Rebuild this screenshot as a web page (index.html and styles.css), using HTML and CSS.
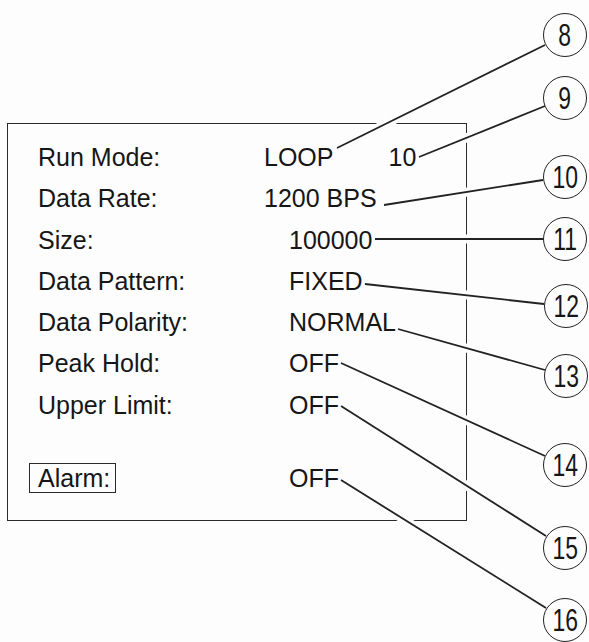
FILE: index.html
```html
<!DOCTYPE html>
<html lang="en">
<head>
  <meta charset="UTF-8">
  <meta name="viewport" content="width=device-width, initial-scale=1.0">
  <title>Run Setup Screen</title>
  <link rel="stylesheet" href="styles.css">
</head>
<body>

  <div class="sheet">
    <div class="panel">
      <div class="settings">
        <div class="label">Run Mode:</div>
        <div class="value">LOOP<span class="count">10</span></div>

        <div class="label">Data Rate:</div>
        <div class="value">1200 BPS</div>

        <div class="label">Size:</div>
        <div class="value indent">100000</div>

        <div class="label">Data Pattern:</div>
        <div class="value indent">FIXED</div>

        <div class="label">Data Polarity:</div>
        <div class="value indent">NORMAL</div>

        <div class="label">Peak Hold:</div>
        <div class="value indent">OFF</div>

        <div class="label">Upper Limit:</div>
        <div class="value indent">OFF</div>

        <div class="label alarm-row"><span class="alarm">Alarm:</span></div>
        <div class="value indent alarm-row">OFF</div>
      </div>
    </div>

    <!-- leader lines: white halo first so the frame is broken where a line crosses it -->
    <svg class="leaders" width="589" height="642" viewBox="0 0 589 642">
      <g class="halo">
        <line x1="347" y1="143" x2="541" y2="47" />
        <line x1="429" y1="153" x2="541" y2="108" />
        <line x1="395" y1="203" x2="539" y2="181" />
        <line x1="386" y1="239" x2="539" y2="239" />
        <line x1="376" y1="285" x2="540" y2="303" />
        <line x1="409" y1="332" x2="541" y2="369" />
        <line x1="351" y1="368" x2="541" y2="454" />
        <line x1="350" y1="412" x2="543" y2="534" />
        <line x1="350" y1="486" x2="543" y2="606" />
      </g>
      <g class="line">
        <line x1="337" y1="148" x2="545" y2="45" />
        <line x1="419" y1="157" x2="545" y2="106" />
        <line x1="384" y1="205" x2="543" y2="180" />
        <line x1="375" y1="239" x2="543" y2="239" />
        <line x1="365" y1="284" x2="544" y2="304" />
        <line x1="398" y1="329" x2="545" y2="370" />
        <line x1="341" y1="363" x2="545" y2="456" />
        <line x1="341" y1="406" x2="546" y2="536" />
        <line x1="341" y1="480" x2="546" y2="608" />
      </g>
    </svg>

    <div class="callout c8"><span>8</span></div>
    <div class="callout c9"><span>9</span></div>
    <div class="callout c10"><span>10</span></div>
    <div class="callout c11"><span>11</span></div>
    <div class="callout c12"><span>12</span></div>
    <div class="callout c13"><span>13</span></div>
    <div class="callout c14"><span>14</span></div>
    <div class="callout c15"><span>15</span></div>
    <div class="callout c16"><span>16</span></div>
  </div>

</body>
</html>
```

FILE: styles.css
```css
body {
  margin: 0;
  background-color: #fdfdfd;
  font-family: "Liberation Sans", Arial, sans-serif;
  color: #161616;
}

.sheet {
  position: relative;
  width: 589px;
  height: 642px;
  padding-top: 123px;
  box-sizing: border-box;
  overflow: hidden;
}

.panel {
  margin-left: 7px;
  width: 460px;
  height: 398px;
  box-sizing: border-box;
  border: 1.5px solid #2a2a2a;
  padding: 13px 0 0 30px;
}

.settings {
  display: grid;
  grid-template-columns: 226px auto;
  font-size: 25px;
  line-height: 41.3px;
}

.indent {
  padding-left: 25px;
}

.count {
  margin-left: 55px;
}

.alarm-row {
  margin-top: 32px;
}

.alarm {
  display: inline-block;
  margin-left: -9px;
  padding: 0 5px 0 8px;
  line-height: 28px;
  border: 1.5px solid #2a2a2a;
}

.leaders {
  position: absolute;
  top: 0;
  left: 0;
}

.halo line {
  stroke: #fdfdfd;
  stroke-width: 9;
}

.line line {
  stroke: #222;
  stroke-width: 1.8;
}

.callout {
  position: absolute;
  width: 44px;
  height: 44px;
  box-sizing: border-box;
  border: 1.8px solid #222;
  border-radius: 50%;
  background-color: #fdfdfd;
  display: flex;
  align-items: center;
  justify-content: center;
  font-size: 31px;
  line-height: 1;
  color: #161616;
}

/* the callout digits are a condensed face */
.callout span {
  display: inline-block;
  transform: scaleX(0.74);
}

.c8  { left: 543px; top: 13px; }
.c9  { left: 543px; top: 76px; }
.c10 { left: 543px; top: 155px; }
.c11 { left: 543px; top: 217px; }
.c12 { left: 544px; top: 284px; }
.c13 { left: 544px; top: 354px; }
.c14 { left: 543px; top: 443px; }
.c15 { left: 543px; top: 526px; }
.c16 { left: 543px; top: 598px; }
```
